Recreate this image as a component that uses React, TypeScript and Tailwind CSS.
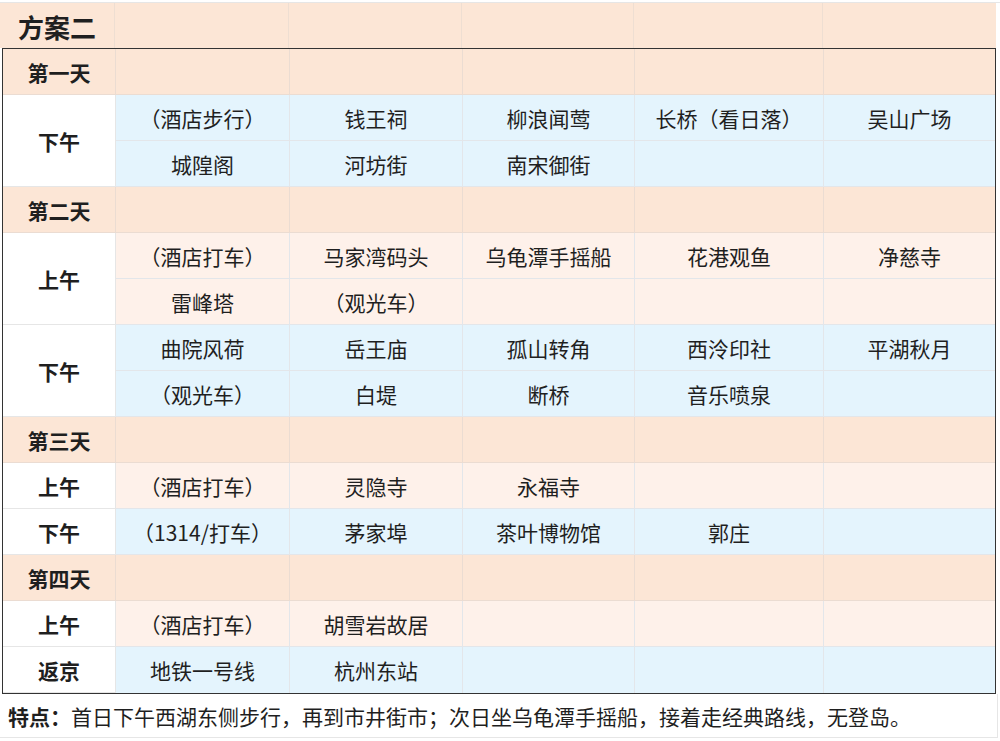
import React from 'react';

type Tone = 'blue' | 'peach';

interface Slot {
  label: string;
  tone: Tone;
  lines: string[][];
}

interface Day {
  title: string;
  slots: Slot[];
}

const days: Day[] = [
  {
    title: '第一天',
    slots: [
      {
        label: '下午',
        tone: 'blue',
        lines: [
          ['（酒店步行）', '钱王祠', '柳浪闻莺', '长桥（看日落）', '吴山广场'],
          ['城隍阁', '河坊街', '南宋御街', '', ''],
        ],
      },
    ],
  },
  {
    title: '第二天',
    slots: [
      {
        label: '上午',
        tone: 'peach',
        lines: [
          ['（酒店打车）', '马家湾码头', '乌龟潭手摇船', '花港观鱼', '净慈寺'],
          ['雷峰塔', '（观光车）', '', '', ''],
        ],
      },
      {
        label: '下午',
        tone: 'blue',
        lines: [
          ['曲院风荷', '岳王庙', '孤山转角', '西泠印社', '平湖秋月'],
          ['（观光车）', '白堤', '断桥', '音乐喷泉', ''],
        ],
      },
    ],
  },
  {
    title: '第三天',
    slots: [
      { label: '上午', tone: 'peach', lines: [['（酒店打车）', '灵隐寺', '永福寺', '', '']] },
      { label: '下午', tone: 'blue', lines: [['（1314/打车）', '茅家埠', '茶叶博物馆', '郭庄', '']] },
    ],
  },
  {
    title: '第四天',
    slots: [
      { label: '上午', tone: 'peach', lines: [['（酒店打车）', '胡雪岩故居', '', '', '']] },
      { label: '返京', tone: 'blue', lines: [['地铁一号线', '杭州东站', '', '', '']] },
    ],
  },
];

const font = { fontFamily: '"Noto Sans CJK SC", "Noto Sans", sans-serif' };

const grid = 'grid grid-cols-[113px_174px_173px_172px_189px_171px] auto-rows-[46px]';

export default function App() {
  return (
    <div className="w-[1000px] h-[741px] bg-white overflow-hidden text-[#1f1f1f]" style={font}>
      <div className="h-[3px] border-b border-[#e6e6e6]" />
      {/* title row */}
      <div className="flex h-[45px] w-[996px] bg-[#fce6d6]">
        <div className="w-[115px] border-r border-[#eeded2] flex items-center pl-[18px] pt-[2px] text-[26px] font-bold">
          方案二
        </div>
        <div className="w-[174px] border-r border-[#eeded2]" />
        <div className="w-[173px] border-r border-[#eeded2]" />
        <div className="w-[172px] border-r border-[#eeded2]" />
        <div className="w-[189px] border-r border-[#eeded2]" />
        <div className="flex-1" />
      </div>

      {/* itinerary table */}
      <div className="ml-[2px] w-[994px] border-[1.5px] border-[#333]">
        <div className={grid}>
          {days.map((day) => (
            <React.Fragment key={day.title}>
              <div className="bg-[#fce6d6] border-b border-r border-[#ebdcd2] flex items-center justify-center pt-[2px] text-[21px] font-bold">
                {day.title}
              </div>
              {[0, 1, 2, 3, 4].map((i) => (
                <div
                  key={i}
                  className={`bg-[#fce6d6] border-b border-[#ebdcd2] ${i < 4 ? 'border-r' : ''}`}
                />
              ))}
              {day.slots.map((slot, si) => (
                <React.Fragment key={si}>
                  <div
                    className={`bg-white border-b border-r border-[#e6e6e6] flex items-center justify-center pt-[2px] text-[21px] font-bold ${
                      slot.lines.length > 1 ? 'row-span-2' : ''
                    }`}
                  >
                    {slot.label}
                  </div>
                  {slot.lines.map((line, li) =>
                    line.map((cell, ci) => (
                      <div
                        key={`${li}-${ci}`}
                        className={`flex items-center justify-center pt-[2px] text-[21px] border-[#e3e6ea] ${
                          slot.tone === 'blue' ? 'bg-[#e4f4fd]' : 'bg-[#fef1ea]'
                        } ${ci < 4 ? 'border-r' : ''} ${
                          day.title === '第四天' && si === 1 ? '' : 'border-b'
                        }`}
                      >
                        {cell}
                      </div>
                    ))
                  )}
                </React.Fragment>
              ))}
            </React.Fragment>
          ))}
        </div>
      </div>

      {/* footer */}
      <div className="h-[44px] w-[998px] border-b border-r border-[#e6e6e6] flex items-center pl-[8px] pt-[2px] text-[21px]">
        <span className="font-bold">特点：</span>
        <span>首日下午西湖东侧步行，再到市井街市；次日坐乌龟潭手摇船，接着走经典路线，无登岛。</span>
      </div>
    </div>
  );
}
